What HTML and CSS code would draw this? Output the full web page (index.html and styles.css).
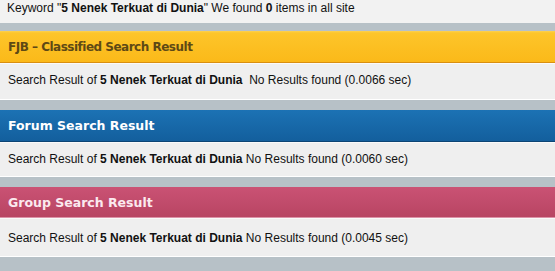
FILE: index.html
```html
<!DOCTYPE html>
<html>
<head>
<meta charset="utf-8">
<link rel="stylesheet" href="styles.css">
</head>
<body>
<div class="page">
  <div class="keyword">Keyword "<b>5 Nenek Terkuat di Dunia</b>" We found <b>0</b> items in all site</div>

  <section class="block">
    <div class="head head-fjb">FJB – Classified Search Result</div>
    <div class="body">Search Result of <b>5 Nenek Terkuat di Dunia</b>&nbsp; No Results found (0.0066 sec)</div>
  </section>

  <section class="block">
    <div class="head head-forum">Forum Search Result</div>
    <div class="body">Search Result of <b>5 Nenek Terkuat di Dunia</b> No Results found (0.0060 sec)</div>
  </section>

  <section class="block">
    <div class="head head-group">Group Search Result</div>
    <div class="body body-last">Search Result of <b>5 Nenek Terkuat di Dunia</b> No Results found (0.0045 sec)</div>
  </section>
</div>
</body>
</html>
```

FILE: styles.css
```css
html, body {
  margin: 0;
  padding: 0;
}
body {
  background: #b7c1c7;
  font-family: "Liberation Sans", Arial, sans-serif;
  font-size: 12px;
  color: #111;
}
.page {
  display: flex;
  flex-direction: column;
  height: 271px;
}
.keyword {
  height: 23px;
  line-height: 17px;
  padding-left: 7px;
  background: #f2f2f2;
}
.block {
  margin-top: 8px;
  display: flex;
  flex-direction: column;
}
.block + .block { margin-top: 10px; }
.head {
  line-height: 32px;
  padding-left: 8px;
  font-family: "DejaVu Sans", Verdana, sans-serif;
  font-weight: bold;
  font-size: 12.5px;
  box-sizing: border-box;
}
.head-fjb {
  height: 32px;
  line-height: 33px;
  font-size: 12px;
  letter-spacing: -0.5px;
  background: linear-gradient(#fdd250 0, #fdc52a 2px, #fbb919 100%);
  border-bottom: 1px solid #d98f10;
  color: #5e4915;
}
.head-forum {
  height: 32px;
  background: linear-gradient(#1c72b4, #135f9d);
  border-bottom: 1px solid #0c4474;
  color: #ffffff;
}
.head-group {
  height: 31px;
  line-height: 31px;
  background: linear-gradient(#ca5274, #b84563);
  border-bottom: 1px solid #dc93a8;
  color: #fbe9ef;
}
.body {
  height: 37px;
  line-height: 33px;
  padding-left: 8px;
  background: #efefef;
  border-top: 1px solid #fafafa;
  border-bottom: 1px solid #ffffff;
  box-sizing: border-box;
}
.head-forum + .body { height: 35px; line-height: 32px; }
.body-last { height: 39px; line-height: 38px; }
```
